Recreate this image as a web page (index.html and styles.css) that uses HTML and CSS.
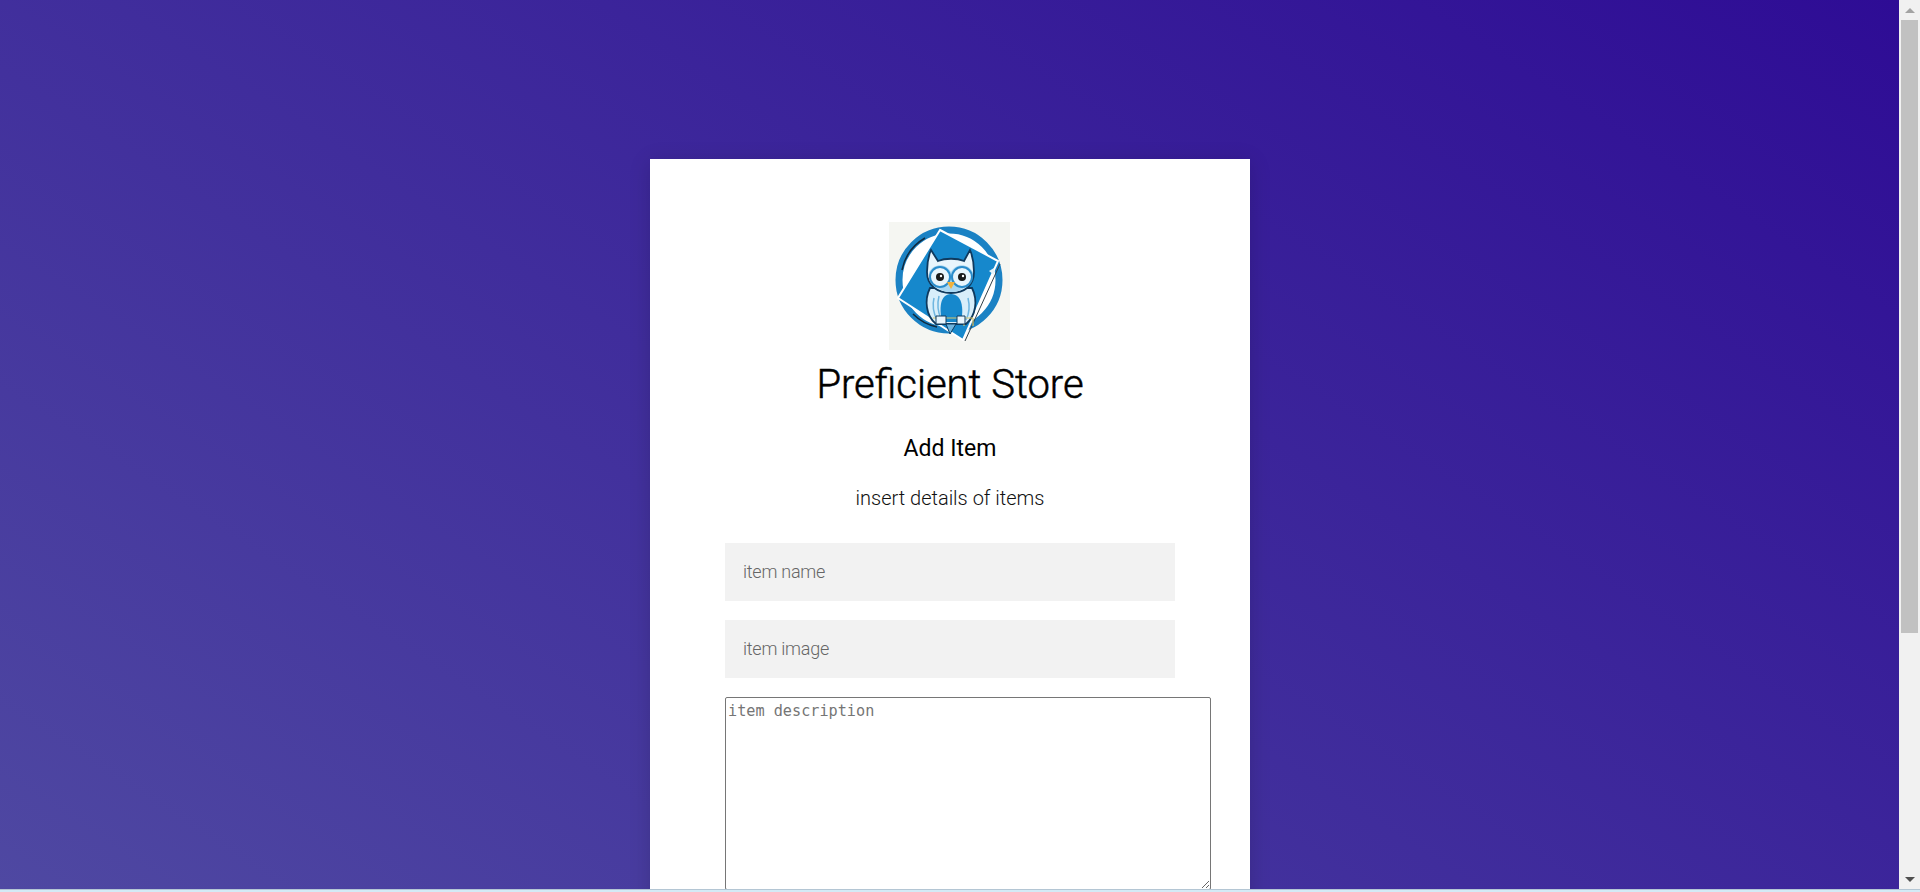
FILE: index.html
```html
<!DOCTYPE html>
<html lang="en">
<head>
    <meta charset="UTF-8">
    <meta name="viewport" content="width=device-width, initial-scale=1.0">
    <title>Preficient Store</title>
    <link rel="stylesheet" href="styles.css">
</head>
<body>
    <div id="window">
        <div id="page">
            <div id="form-card">
                <!-- Store logo -->
                <svg class="logo" viewBox="0 0 121 128" width="121" height="128">
                    <rect width="121" height="128" fill="#f5f6f2"/>
                    <circle cx="60" cy="58" r="50" fill="#fff" stroke="#1b82c4" stroke-width="7"/>
                    <path d="M13 48A48 48 0 0 1 36 16M24 92A48 48 0 0 0 48 105" fill="none" stroke="#10293c" stroke-width="1.5"/>
                    <polygon points="51,8 109,39 74,118 9,76" fill="#1688cc" stroke="#fff" stroke-width="2"/>
                    <path d="M111 42L76 119" stroke="#33414a" stroke-width="1"/>
                    <polygon points="100,49 105,46 105,53" fill="#e6f3fa"/>
                    <!-- owl body -->
                    <path d="M41 66C35 78 37 94 47 102H77C87 94 89 78 83 66Z" fill="#d8eefa" stroke="#0f3a5e" stroke-width="1.8"/>
                    <path d="M62 72C51 72 50 86 53 100H72C75 86 73 72 62 72Z" fill="#1688cc"/>
                    <path d="M45 76C43 84 45 92 48 98M50 74C48 82 49 90 52 97M79 76C81 84 80 92 77 98" fill="none" stroke="#6fb6e0" stroke-width="1.5"/>
                    <!-- owl head -->
                    <path d="M42 28L49 39C56 36 68 36 75 39L81 28C84 35 85 42 85 50C85 64 75 71 62 71C49 71 38 64 38 50C38 42 39 35 42 28Z" fill="#e8f5fc" stroke="#0f3a5e" stroke-width="1.8"/>
                    <path d="M40 50C46 40 58 42 62 50C66 42 78 40 84 50C84 62 74 70 62 70C50 70 40 62 40 50Z" fill="#a9d8f3"/>
                    <circle cx="51" cy="55" r="10" fill="#e8f5fc" stroke="#2a8ccb" stroke-width="2"/>
                    <circle cx="73" cy="55" r="10" fill="#e8f5fc" stroke="#2a8ccb" stroke-width="2"/>
                    <circle cx="51" cy="55" r="4" fill="#1a1a1a"/>
                    <circle cx="73" cy="55" r="4" fill="#1a1a1a"/>
                    <circle cx="52" cy="54" r="1.2" fill="#fff"/>
                    <circle cx="74" cy="54" r="1.2" fill="#fff"/>
                    <polygon points="58,60 66,60 62,67" fill="#f2b23c"/>
                    <!-- perch and feet -->
                    <path d="M44 96H84M75 96V104M84 96V104" stroke="#d9c66a" stroke-width="1.2" fill="none"/>
                    <path d="M47 94H57V102H47ZM68 94H76V102H68Z" fill="#e8f5fc" stroke="#0f3a5e" stroke-width="1"/>
                    <path d="M57 102L61 112L67 102Z" fill="#6fb6e0" stroke="#0f3a5e" stroke-width="1"/>
                </svg>
                <h1 class="store-name">Preficient Store</h1>
                <h2 class="form-title">Add Item</h2>
                <p class="form-hint">insert details of items</p>
                <form class="item-form">
                    <input class="field" type="text" placeholder="item name">
                    <input class="field" type="text" placeholder="item image">
                    <textarea class="description" placeholder="item description"></textarea>
                </form>
            </div>
        </div>
        <!-- Scrollbar -->
        <div class="scrollbar">
            <span class="arrow arrow-up"></span>
            <div class="scroll-track"><div class="scroll-thumb"></div></div>
            <span class="arrow arrow-down"></span>
        </div>
    </div>
    <div class="bottom-strip"></div>
</body>
</html>
```

FILE: styles.css
```css
html, body {
    height: 100%;
    margin: 0;
    overflow: hidden;
}

body {
    font-family: Roboto, "Liberation Sans", sans-serif;
    display: flex;
    flex-direction: column;
    background-color: #d3eaf6;
}

#window {
    display: flex;
    height: 889px;
    overflow: hidden;
}

/* page is taller than the window, the gradient runs over all of it */
#page {
    flex: 1;
    align-self: flex-start;
    height: 1235px;
    box-sizing: border-box;
    padding-top: 159px;
    background: linear-gradient(to top right, #5452a4, #2e0c95);
}

#form-card {
    width: 600px;
    height: 1000px;
    margin-left: 650px;
    padding-top: 63px;
    box-sizing: border-box;
    display: flex;
    flex-direction: column;
    align-items: center;
    background-color: #fff;
    box-shadow: 0 3px 20px rgba(0, 0, 0, 0.15);
}

.logo {
    display: block;
    margin-right: 1px;
}

.store-name {
    margin: 11px 0 0;
    font-size: 40px;
    font-weight: 300;
    line-height: 47px;
    color: #000;
    -webkit-text-stroke: 0.5px #000;
}

.form-title {
    margin: 27px 0 0;
    font-size: 23px;
    font-weight: 400;
    line-height: 28px;
    color: #000;
}

.form-hint {
    margin: 23px 0 0;
    font-size: 20px;
    font-weight: 300;
    line-height: 24px;
    color: #111;
}

.item-form {
    width: 450px;
    margin-top: 33px;
    display: flex;
    flex-direction: column;
    gap: 19px;
}

.field {
    width: 100%;
    height: 58px;
    box-sizing: border-box;
    padding: 0 18px 1px;
    border: none;
    outline: none;
    background-color: #f2f2f2;
    font-family: Roboto, sans-serif;
    font-size: 18px;
    font-weight: 300;
    letter-spacing: -0.25px;
    color: #333;
}

.field::placeholder {
    color: #666;
}

.description {
    width: 486px;
    height: 193px;
    flex-shrink: 0;
    box-sizing: border-box;
    padding: 2px;
    border: 1px solid #767676;
    border-radius: 2px;
    font-family: "DejaVu Sans Mono", monospace;
    font-size: 15.2px;
    line-height: 22px;
}

.scrollbar {
    width: 21px;
    display: flex;
    flex-direction: column;
    align-items: center;
    background-color: #f1f1f1;
}

.arrow {
    width: 0;
    height: 0;
    border-left: 5px solid transparent;
    border-right: 5px solid transparent;
}

.arrow-up {
    margin-top: 8px;
    border-bottom: 5px solid #a3a3a3;
}

.arrow-down {
    margin-bottom: 7px;
    border-top: 5px solid #505050;
}

.scroll-track {
    flex: 1;
    width: 17px;
    padding-top: 7px;
}

.scroll-thumb {
    height: 613px;
    background-color: #c1c1c1;
}

.bottom-strip {
    height: 3px;
    background-color: #d3eaf6;
    border-top: 1px solid #b4c6d4;
    box-sizing: border-box;
}
```
